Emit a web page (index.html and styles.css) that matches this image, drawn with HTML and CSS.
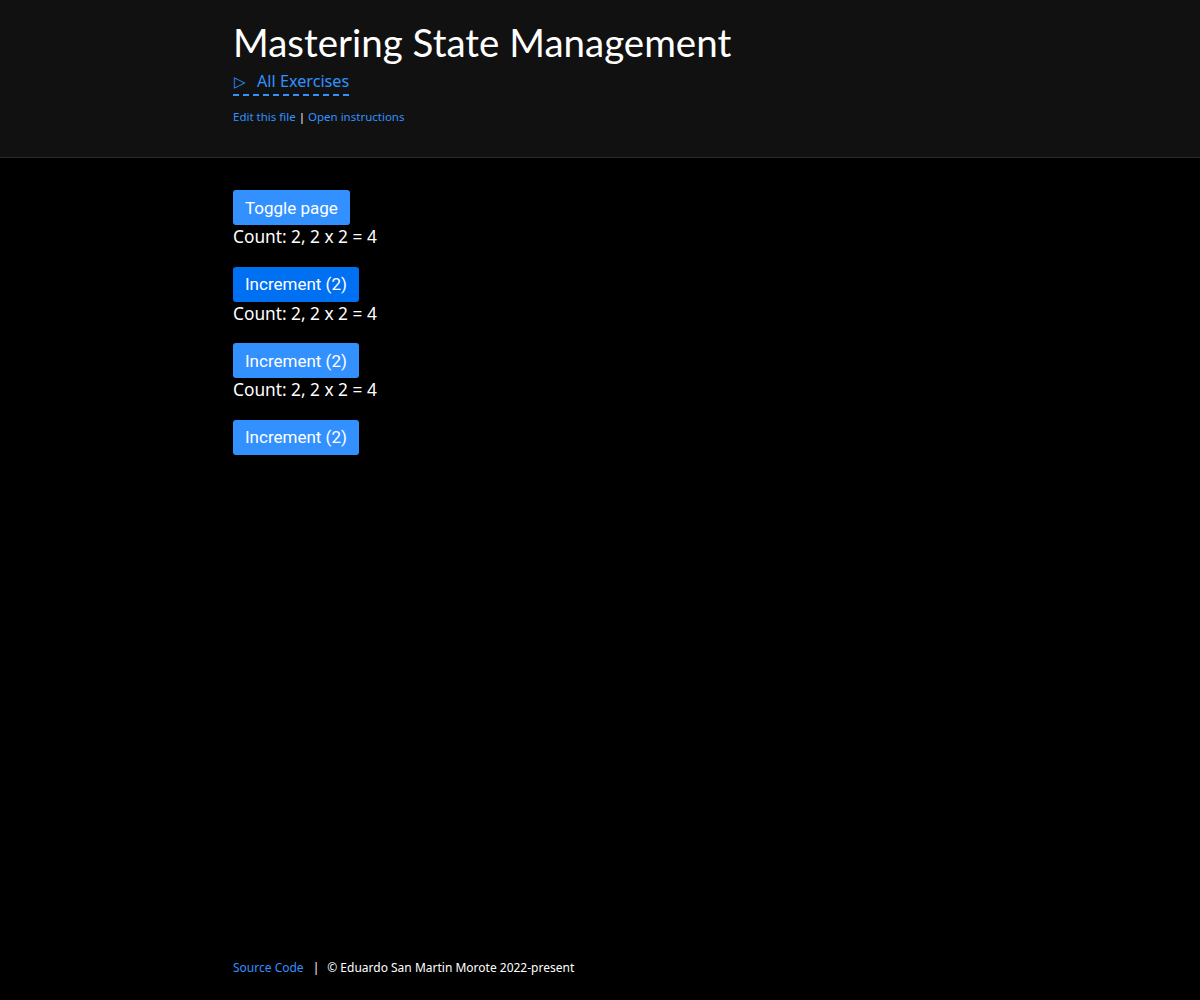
FILE: index.html
```html
<!DOCTYPE html>
<html lang="en">
<head>
<meta charset="utf-8">
<title>Mastering State Management</title>
<link rel="stylesheet" href="styles.css">
</head>
<body>
<div class="page">
  <header class="site-header">
    <div class="container">
      <h1 class="title">Mastering State Management</h1>
      <a class="all-link" href="#"><span class="tri">▷</span>All Exercises</a>
      <p class="file-links"><a href="#">Edit this file</a> | <a href="#">Open instructions</a></p>
    </div>
  </header>
  <main class="container content">
    <button class="btn">Toggle page</button>
    <p class="count">Count: 2, 2 x 2 = 4</p>
    <button class="btn btn-active">Increment (2)</button>
    <p class="count">Count: 2, 2 x 2 = 4</p>
    <button class="btn">Increment (2)</button>
    <p class="count">Count: 2, 2 x 2 = 4</p>
    <button class="btn">Increment (2)</button>
  </main>
  <footer class="container footer">
    <a href="#">Source Code</a><span class="sep">|</span><span>© Eduardo San Martin Morote 2022-present</span>
  </footer>
</div>
</body>
</html>
```
FILE: styles.css
```css
html, body {
  margin: 0;
  padding: 0;
  background: #000;
  color: #fff;
  font-family: "Noto Sans", "Open Sans", sans-serif;
}
.page {
  min-height: 1000px;
  display: flex;
  flex-direction: column;
}
.container {
  width: 734px;
  margin: 0 auto;
  box-sizing: border-box;
}
.site-header {
  background: #111;
  border-bottom: 1px solid #2a2a2a;
  height: 158px;
  box-sizing: border-box;
}
.title {
  margin: 0;
  padding-top: 19px;
  font-family: Lato, "Noto Sans", sans-serif;
  font-size: 38.5px;
  font-weight: 400;
  line-height: 47px;
}
.all-link {
  display: inline-block;
  margin-top: 4px;
  color: #3291ff;
  text-decoration: none;
  font-size: 16.2px;
  line-height: 22px;
  border-bottom: 2px dashed #3291ff;
  padding-bottom: 2px;
}
.tri {
  font-size: 15px;
  margin-right: 11px;
  margin-left: 1px;
}
.file-links {
  margin: 13px 0 0;
  font-size: 11.5px;
  line-height: 16px;
  color: #fff;
}
.file-links a, .footer a {
  color: #3291ff;
  text-decoration: none;
}
.content {
  padding-top: 32px;
  flex: 1;
}
.btn {
  display: block;
  background: #3291ff;
  color: #fff;
  border: none;
  border-radius: 3px;
  font-family: Roboto, "Liberation Sans", sans-serif;
  font-size: 17px;
  height: 35px;
  padding: 0 12px;
  cursor: pointer;
}
.btn-active {
  background: #0070f3;
}
.count {
  margin: 0 0 17px;
  font-size: 17.3px;
  line-height: 24.5px;
  color: #fff;
}
.footer {
  padding-bottom: 24px;
  font-size: 12px;
  line-height: 16px;
}
.sep {
  margin: 0 8px 0 9px;
}
```
